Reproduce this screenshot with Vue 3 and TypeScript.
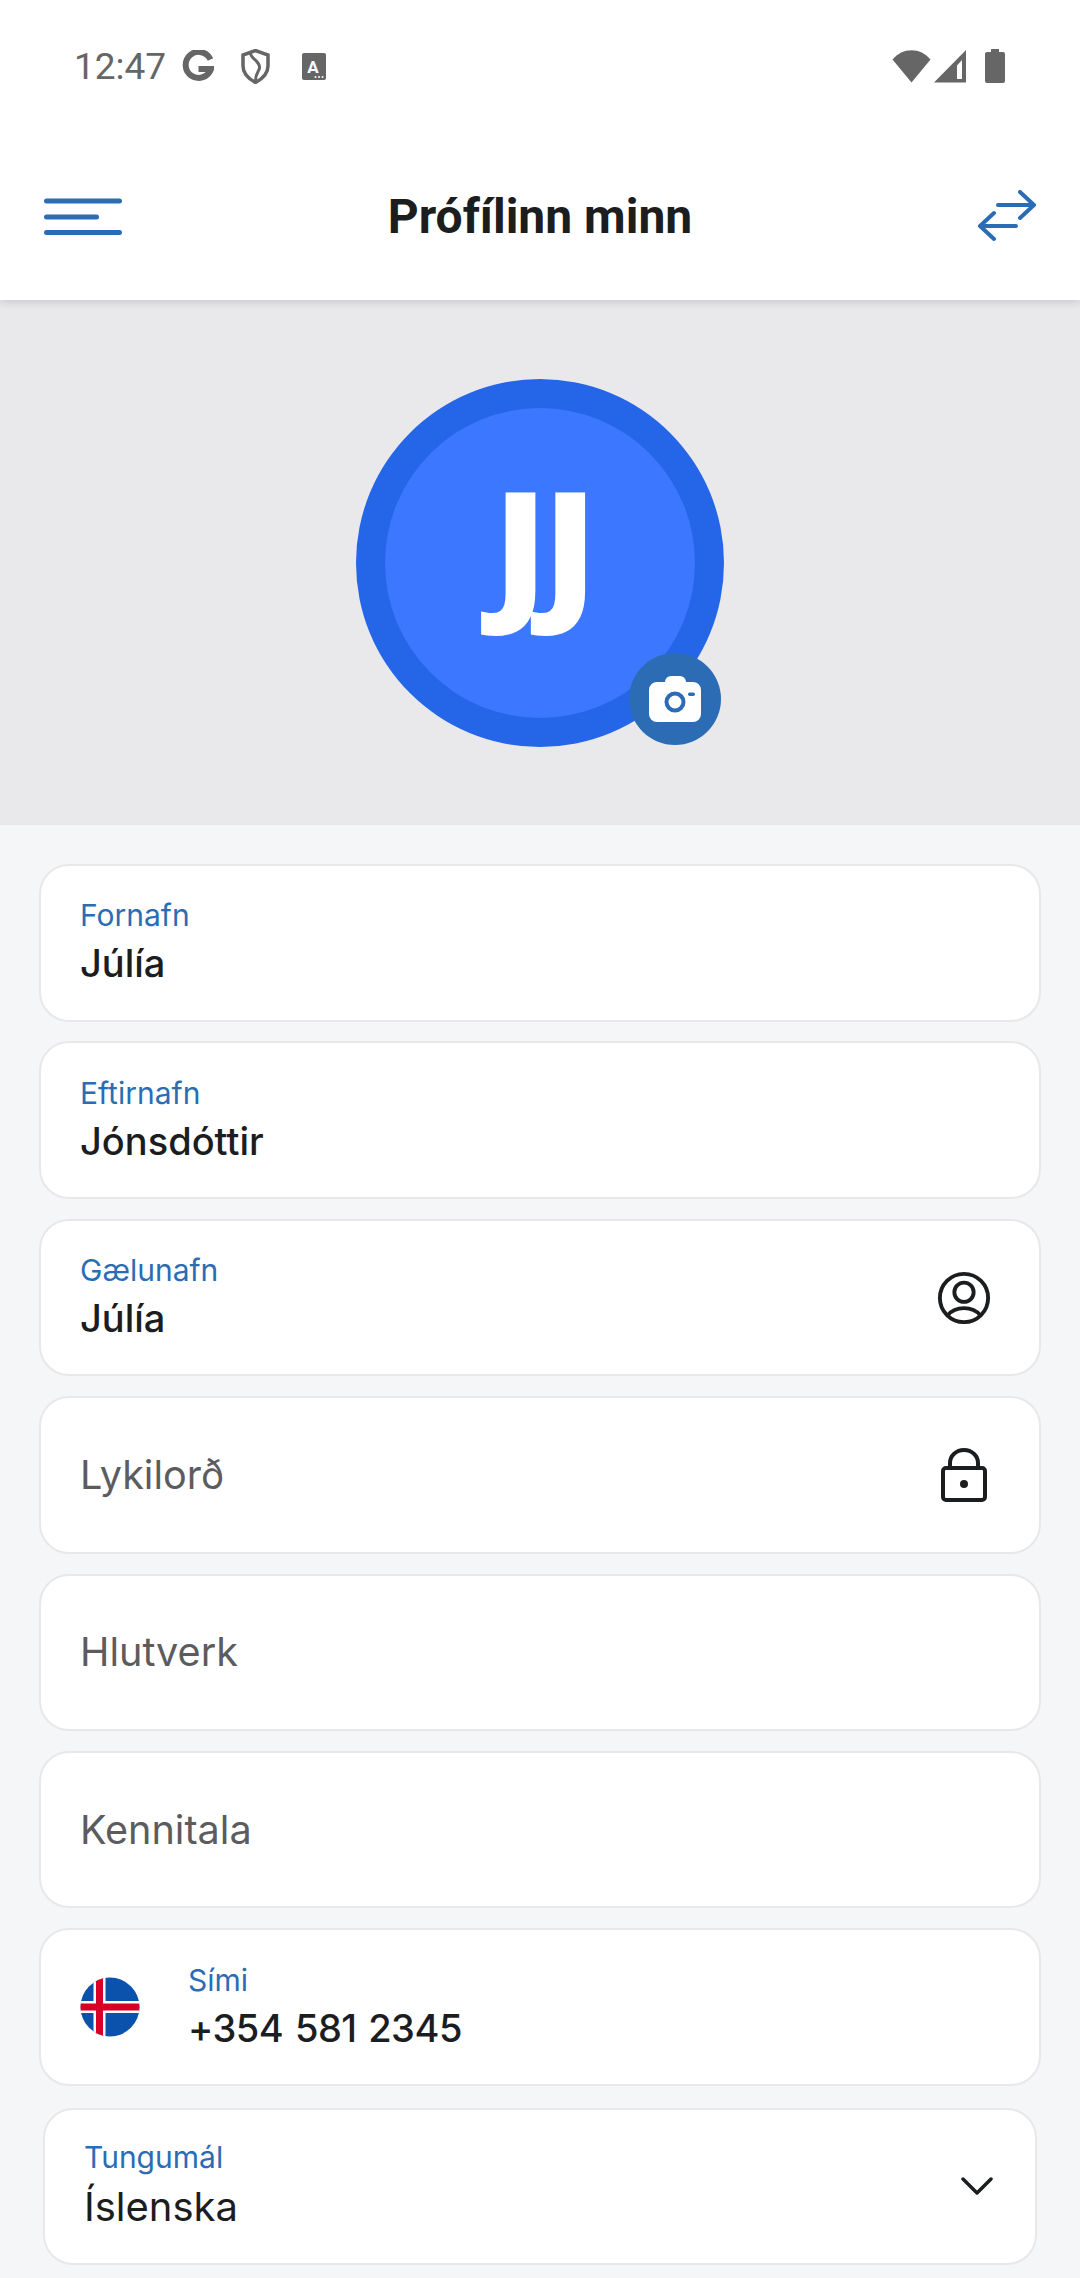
<template>
  <div class="page">
    <header class="top">
      <div class="status">
        <span class="time">12:47</span>
        <svg class="st-g" width="32" height="33" viewBox="0 0 32 33">
          <path d="M28.500 9.500A13 13 0 1 0 29 19H16.500" fill="none" stroke="#666" stroke-width="6" />
        </svg>
        <svg class="st-shield" width="29" height="35" viewBox="0 0 28 35">
          <path d="M14 1.500 26.500 6v11c0 7.500-5 12.500-12.500 16.500C6.500 29.500 1.500 24.500 1.500 17V6Z" fill="none" stroke="#666" stroke-width="3.500" />
          <path d="M9 4c0 6 10 8 9 15-.5 4-4 5-4 13" fill="none" stroke="#666" stroke-width="3" />
        </svg>
        <svg class="st-a" width="24" height="27" viewBox="0 0 24 27">
          <rect width="24" height="27" rx="2" fill="#666" />
          <text x="11" y="20" text-anchor="middle" class="st-a-letter">A</text>
          <circle cx="13.500" cy="24" r="1" fill="#fff" />
          <circle cx="17" cy="24" r="1" fill="#fff" />
          <circle cx="20.500" cy="24" r="1" fill="#fff" />
        </svg>
        <div class="spacer"></div>
        <svg width="39" height="33" viewBox="0 0 38 33">
          <path d="M0 9.500C10-3 28-3 38 9.500L19 32.500Z" fill="#666" />
        </svg>
        <svg class="st-signal" width="32" height="33" viewBox="0 0 32 33">
          <path fill-rule="evenodd" d="M32 0V32.500H0ZM28 10l-5 5.500V29h5Z" fill="#666" />
        </svg>
        <svg class="st-battery" width="20" height="34" viewBox="0 0 20 34">
          <path d="M6 0h8v3h4a2 2 0 0 1 2 2v27a2 2 0 0 1-2 2H2a2 2 0 0 1-2-2V5a2 2 0 0 1 2-2h4Z" fill="#666" />
        </svg>
      </div>
      <div class="toolbar">
        <svg width="78" height="37" viewBox="0 0 78 37">
          <path d="M2.500 3h73M2.500 19h50M2.500 34.500h73" fill="none" stroke="#2b6cb5" stroke-width="5" stroke-linecap="round" />
        </svg>
        <h1 class="title">Prófílinn minn</h1>
        <svg class="swap" width="58" height="52" viewBox="0 0 58 52">
          <path d="M20 15h36M42 2l14 13-14 13M38 36H2M16 23 2 36l14 13" fill="none" stroke="#2b6cb5" stroke-width="4" stroke-linecap="round" stroke-linejoin="round" />
        </svg>
      </div>
    </header>

    <section class="hero">
      <div class="avatar">
        <div class="avatar-inner">JJ</div>
        <button class="camera">
          <svg width="52" height="48" viewBox="0 0 52 48">
            <path d="M16 7a6 6 0 0 1 6-6h9a6 6 0 0 1 6 6h7a8 8 0 0 1 8 8v24a8 8 0 0 1-8 8H8a8 8 0 0 1-8-8V15a8 8 0 0 1 8-8Z" fill="#fff" />
            <circle cx="26" cy="27" r="8.500" fill="none" stroke="#2b6cb5" stroke-width="4" />
            <rect x="39" y="17.500" width="7" height="3.500" rx="1.750" fill="#2b6cb5" />
          </svg>
        </button>
      </div>
    </section>

    <main class="form">
      <div v-for="f in fields" :key="f.label" class="field">
        <div class="field-body">
          <template v-if="f.value">
            <div class="label">{{ f.label }}</div>
            <div class="value">{{ f.value }}</div>
          </template>
          <div v-else class="placeholder">{{ f.label }}</div>
        </div>
        <svg v-if="f.icon === 'user'" width="54" height="54" viewBox="0 0 56 56">
          <g fill="none" stroke="#1b1d1f" stroke-width="4">
            <circle cx="28" cy="28" r="25" />
            <circle cx="28" cy="22" r="10" />
            <path d="M11 46c8-10 26-10 34 0" />
          </g>
        </svg>
        <svg v-else-if="f.icon === 'lock'" class="lock" width="46" height="54" viewBox="0 0 46 54">
          <g fill="none" stroke="#1b1d1f" stroke-width="4">
            <rect x="2" y="20" width="42" height="32" rx="3" />
            <path d="M9 20v-5a14 13 0 0 1 28 0v5" />
          </g>
          <circle cx="23" cy="36" r="4" fill="#1b1d1f" />
        </svg>
      </div>

      <div class="field">
        <svg class="flag" width="60" height="60" viewBox="0 0 60 60">
          <defs>
            <clipPath id="flag-clip"><circle cx="30" cy="30" r="29.500" /></clipPath>
          </defs>
          <g clip-path="url(#flag-clip)">
            <rect width="60" height="60" fill="#0b52ad" />
            <path d="M0 30h60M19.500 0v60" stroke="#fff" stroke-width="12" />
            <path d="M0 30h60M19.500 0v60" stroke="#d80027" stroke-width="7" />
          </g>
        </svg>
        <div class="field-body">
          <div class="label">Sími</div>
          <div class="value phone">+354 581 2345</div>
        </div>
      </div>

      <div class="field language">
        <div class="field-body">
          <div class="label">Tungumál</div>
          <div class="value regular">Íslenska</div>
        </div>
        <svg class="chevron" width="32" height="18" viewBox="0 0 32 18">
          <path d="M2 2l14 14L30 2" fill="none" stroke="#1b1d1f" stroke-width="3.500" stroke-linecap="round" stroke-linejoin="round" />
        </svg>
      </div>
    </main>
  </div>
</template>

<script setup lang="ts">
interface Field {
  label: string;
  value?: string;
  icon?: 'user' | 'lock';
}

const fields: Field[] = [
  { label: 'Fornafn', value: 'Júlía' },
  { label: 'Eftirnafn', value: 'Jónsdóttir' },
  { label: 'Gælunafn', value: 'Júlía', icon: 'user' },
  { label: 'Lykilorð', icon: 'lock' },
  { label: 'Hlutverk' },
  { label: 'Kennitala' },
];
</script>

<style>
html,
body {
  margin: 0;
  background: #f5f6f8;
}
</style>

<style scoped>
.page {
  width: 1080px;
  height: 2278px;
  overflow: hidden;
  background: #f5f6f8;
  font-family: Inter, "Liberation Sans", sans-serif;
  display: flex;
  flex-direction: column;
}

.top {
  height: 300px;
  background: #fff;
  box-shadow: 0 3px 8px rgba(0, 0, 0, 0.12);
  position: relative;
  z-index: 1;
  flex: none;
}

.status {
  height: 132px;
  padding: 0 75px 0 74px;
  display: flex;
  align-items: center;
  box-sizing: border-box;
}

.time {
  font-family: Roboto, sans-serif;
  font-size: 37px;
  color: #666;
  margin-right: 16px;
}

.st-shield {
  margin-left: 27px;
}

.st-a {
  margin-left: 32px;
}

.st-a-letter {
  font-family: Roboto, sans-serif;
  font-weight: 700;
  font-size: 17px;
  fill: #fff;
}

.spacer {
  flex: 1;
}

.st-signal {
  margin-left: 3px;
}

.st-battery {
  margin-left: 19px;
}

.toolbar {
  height: 168px;
  padding: 0 44px;
  display: grid;
  grid-template-columns: 1fr auto 1fr;
  align-items: center;
}

.title {
  margin: 0;
  font-family: Roboto, sans-serif;
  font-size: 48px;
  font-weight: 700;
  color: #1b1d1f;
}

.swap {
  justify-self: end;
}

.hero {
  height: 525px;
  flex: none;
  background: #e9e9ec;
  display: flex;
  align-items: center;
  justify-content: center;
}

.avatar {
  width: 368px;
  height: 368px;
  border-radius: 50%;
  background: #2565e8;
  display: flex;
  align-items: center;
  justify-content: center;
  position: relative;
}

.avatar-inner {
  width: 310px;
  height: 310px;
  box-sizing: border-box;
  padding: 0 0 40px 6px;
  border-radius: 50%;
  background: #3b78ff;
  color: #fff;
  font-family: "Open Sans", sans-serif;
  font-size: 153px;
  font-weight: 800;
  letter-spacing: -4px;
  display: flex;
  align-items: center;
  justify-content: center;
}

.camera {
  position: absolute;
  right: 3px;
  bottom: 2px;
  width: 92px;
  height: 92px;
  padding: 0;
  border: 0;
  border-radius: 50%;
  background: #2b6cb5;
  display: flex;
  align-items: center;
  justify-content: center;
}

.form {
  padding: 39px 39px 0;
  display: flex;
  flex-direction: column;
  gap: 19.9px;
}

.field {
  height: 157.5px;
  flex: none;
  box-sizing: border-box;
  padding: 0 48px 0 39px;
  background: #fff;
  border: 2px solid #e8e8ea;
  border-radius: 30px;
  display: flex;
  align-items: center;
}

.field-body {
  flex: 1;
}

.label {
  font-size: 30px;
  line-height: 36px;
  color: #2b6cb5;
}

.value {
  margin-top: 5px;
  font-size: 38px;
  line-height: 50px;
  font-weight: 500;
  color: #1b1d1f;
}

.value.phone {
  letter-spacing: -0.5px;
  word-spacing: 2px;
}

.value.regular {
  margin-top: 7px;
  font-size: 40px;
  font-weight: 400;
}

.placeholder {
  font-size: 39.6px;
  color: #5c5c5f;
}

.lock {
  margin-right: 4px;
}

.flag {
  margin-right: 48px;
}

.language {
  margin: 2px 4px 0;
  padding-right: 42px;
}

.language .field-body {
  padding-bottom: 2px;
}
</style>
